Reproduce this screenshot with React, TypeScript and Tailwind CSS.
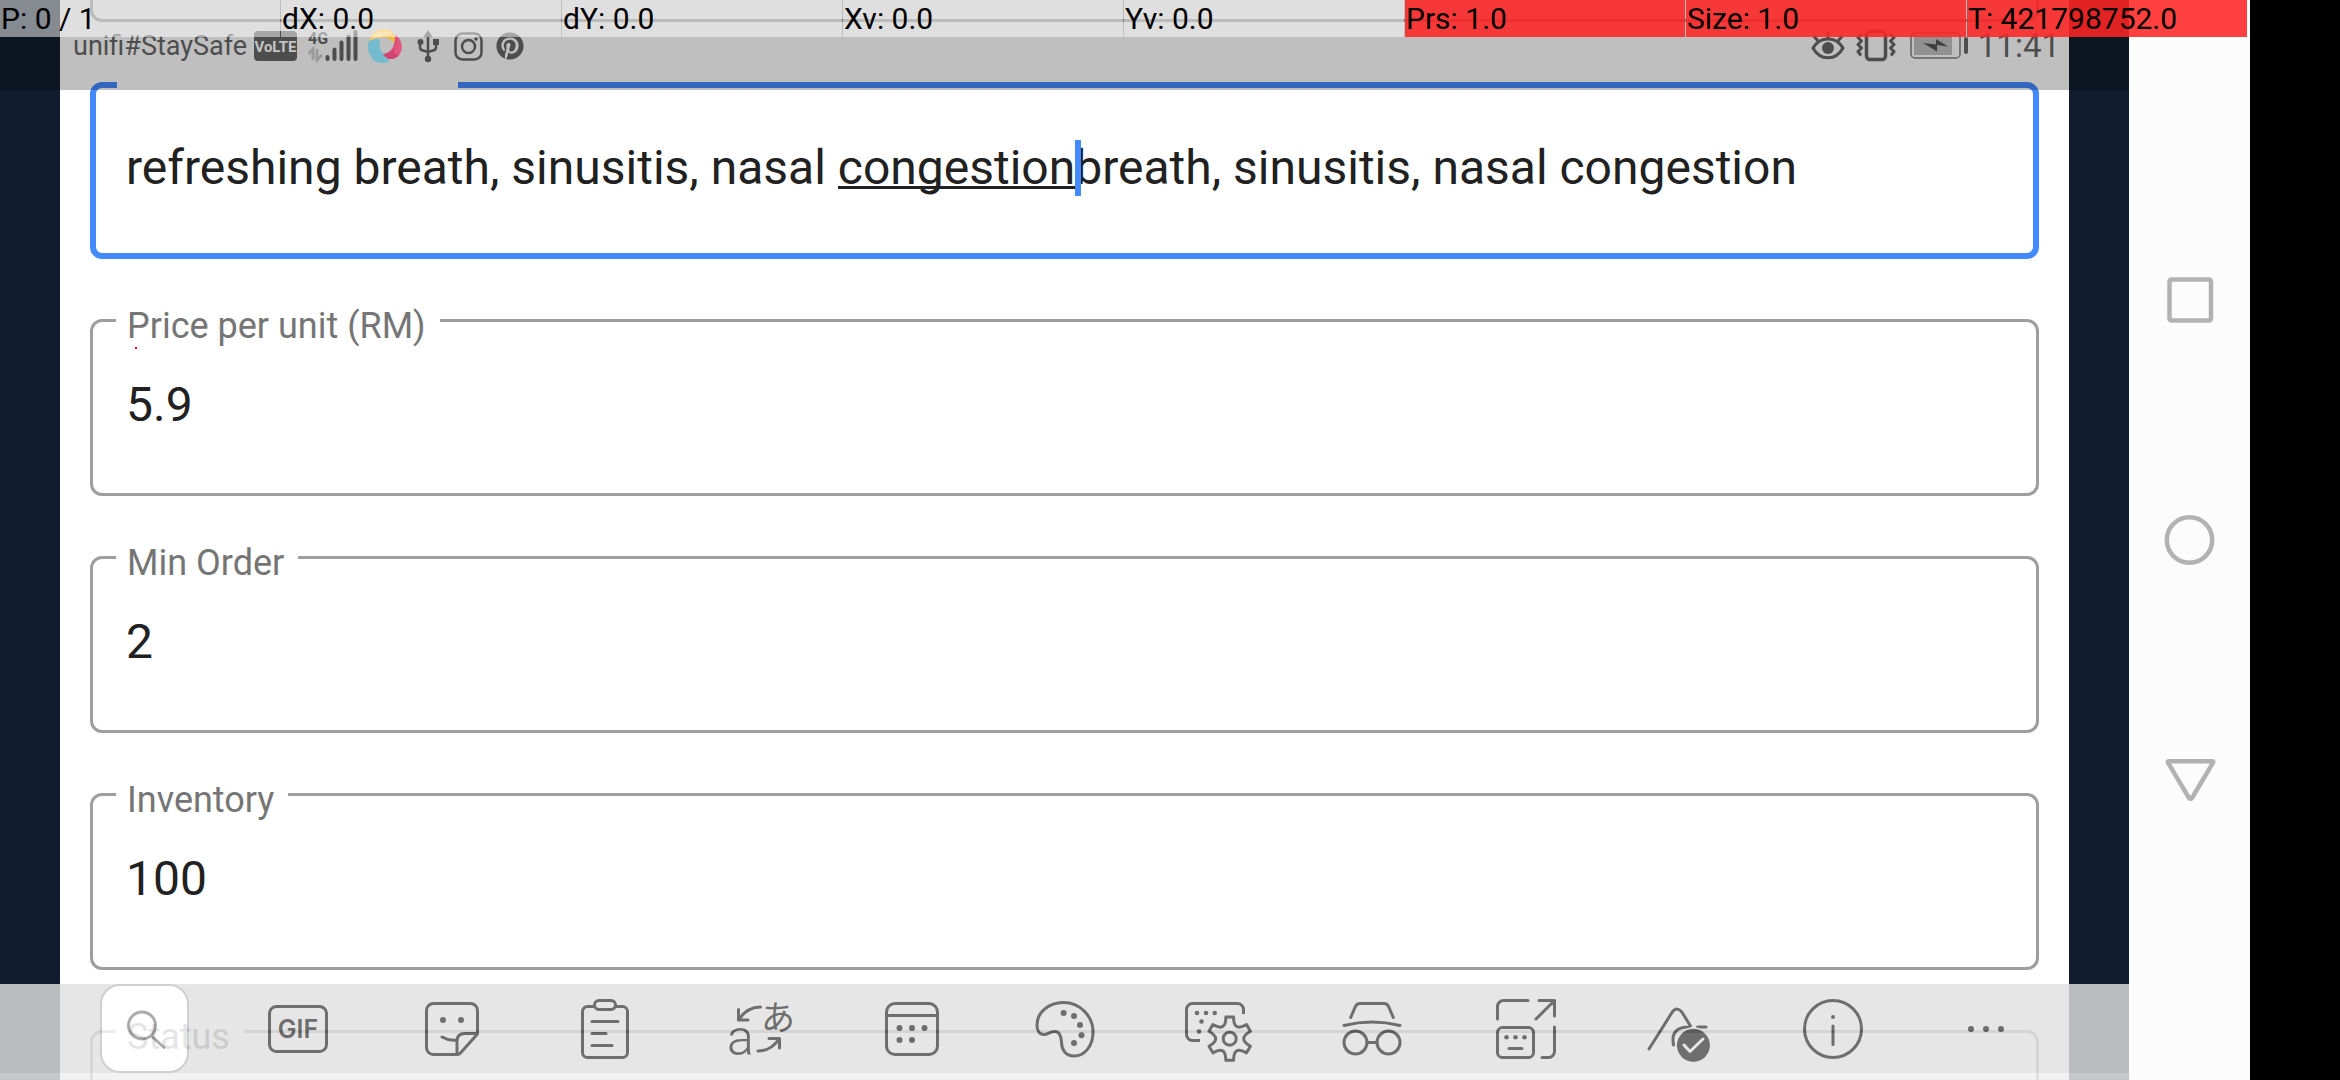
import type { ReactNode } from "react";
import { FaPinterest } from "react-icons/fa";

const pointerCells = [
  { text: "P: 0 / 1", hot: false },
  { text: "dX: 0.0", hot: false },
  { text: "dY: 0.0", hot: false },
  { text: "Xv: 0.0", hot: false },
  { text: "Yv: 0.0", hot: false },
  { text: "Prs: 1.0", hot: true },
  { text: "Size: 1.0", hot: true },
  { text: "T: 421798752.0", hot: true },
];

function PointerBar() {
  return (
    <div className="absolute left-0 right-[93px] top-0 z-30 grid grid-cols-8 gap-px text-[30px] leading-[37px] text-black">
      {pointerCells.map((c) => (
        <div key={c.text} className="h-[37px] bg-white/50">
          <div className={c.hot ? "h-full whitespace-nowrap bg-[#ff0000]/75 pl-px" : "h-full whitespace-nowrap pl-px"}>
            {c.text}
          </div>
        </div>
      ))}
    </div>
  );
}

function StatusBar() {
  return (
    <div className="absolute inset-x-0 top-0 z-20 flex h-[90px] items-start justify-between bg-black/25 pl-[73px] pr-[69px] pt-[29px] text-[#4d4d4d]">
      <div className="flex h-[34px] items-center">
        <span className="w-[181px] whitespace-nowrap text-[27px] leading-[34px]">unifi#StaySafe</span>
        <svg className="h-[34px] w-[43px]" viewBox="0 0 43 34" role="img" aria-label="VoLTE">
          <rect x="0" y="2" width="43" height="30" rx="4" fill="currentColor" />
          <text x="21.5" y="22.500" textAnchor="middle" fontSize="15" fontWeight="700" fontFamily="Roboto, sans-serif" fill="#c4c4c4">VoLTE</text>
        </svg>
        <svg className="ml-[11px] h-[34px] w-[50px]" viewBox="0 0 50 34" role="img" aria-label="4G signal">
          <text x="0" y="15" fontSize="16" fontWeight="700" fontFamily="Roboto, sans-serif" fill="currentColor">4G</text>
          <path d="M0 25l5-5v11M9 20v11l5-5" fill="none" stroke="#9b9b9b" strokeWidth="3" />
          <path d="M19.500 30v-2M26.500 30v-9.500M33.500 30v-16.500M40.500 30V7.500M47.500 30V3" stroke="currentColor" strokeWidth="4" strokeLinecap="round" />
        </svg>
        <svg className="ml-[10px] h-[34px] w-[35px]" viewBox="0 0 35 34" aria-hidden="true">
          <path d="M1 12C4 3 10 0 17 0c7 0 11 4 10 15C22 7 11 6 1 12Z" fill="#efb83a" />
          <path d="M1 12C6 2 16 0 24 4c-2 4-13 2-23 8Z" fill="#f5cf70" />
          <path d="M27 5C34 10 36 20 31 26 27 31 20 32 14 25c9 0 14-9 13-20Z" fill="#e2567f" />
          <path d="M27 5c4 10-1 20-13 20 4 6 12 7 17 1-9 1-2-14-4-21Z" fill="#cf4470" />
          <path d="M0 13c4-3 8-4 12-2-2 8 2 15 10 21-8 5-17 1-20-6-2-4-3-8-2-13Z" fill="#74bccd" />
        </svg>
        <svg className="ml-[14px] h-[34px] w-[22px]" viewBox="0 0 22 34" fill="none" stroke="currentColor" strokeWidth="2.500" aria-hidden="true">
          <path d="M11 6v24M3 15v3q0 3 3 3.500l5 1.500 5-1.500q3-.5 3-3.500v-4" />
          <path d="M11 1l4.500 7h-9Z" fill="currentColor" stroke="none" />
          <circle cx="3.500" cy="13" r="3" fill="currentColor" stroke="none" />
          <rect x="16" y="10" width="6" height="6" fill="currentColor" stroke="none" />
          <circle cx="11" cy="30" r="3.200" fill="currentColor" stroke="none" />
        </svg>
        <svg className="ml-[15px] h-[34px] w-[29px]" viewBox="0 0 29 34" fill="none" stroke="currentColor" strokeWidth="2.500" aria-hidden="true">
          <rect x="1.500" y="4.500" width="26" height="26" rx="7" />
          <circle cx="14.500" cy="17.500" r="6.500" />
          <circle cx="22" cy="10" r="1.800" fill="currentColor" stroke="none" />
        </svg>
        <FaPinterest className="ml-[13px] h-[28px] w-[28px]" aria-hidden="true" />
      </div>
      <div className="flex h-[34px] items-center">
        <svg className="h-[34px] w-[34px]" viewBox="0 0 34 34" fill="none" stroke="currentColor" strokeWidth="3" aria-hidden="true">
          <path d="M2 19C9 7 25 7 32 19 25 32 9 32 2 19Z" />
          <path d="M17 9V2M7 12L2.500 6.500M27 12l4.500-5.500" />
          <circle cx="17" cy="19" r="6" fill="currentColor" stroke="none" />
        </svg>
        <svg className="ml-[11px] h-[34px] w-[40px]" viewBox="0 0 40 34" fill="none" stroke="currentColor" strokeWidth="3" strokeLinejoin="round" aria-hidden="true">
          <rect x="10.500" y="2.500" width="19" height="28" rx="3.500" strokeWidth="3.500" />
          <path d="M5.500 5L2 8.500 5.500 12 2 15.500 5.500 19 2 22.500 5 26.500M34.500 5L38 8.500 34.500 12l3.500 3.500-3.500 3.500 3.500 3.500-3 4" />
        </svg>
        <svg className="ml-[14px] h-[34px] w-[58px]" viewBox="0 0 58 34" fill="none" aria-hidden="true">
          <rect x="1" y="4" width="49" height="25" rx="4" stroke="#606060" strokeWidth="1.500" />
          <rect x="4" y="7" width="38" height="19" fill="#919191" />
          <path d="M13 14l13 1.500V10l12 7.500-11-1.500v6.500Z" fill="#3e3e3e" />
          <rect x="54" y="8" width="4" height="17" rx="2" fill="currentColor" />
        </svg>
        <span className="ml-[10px] text-[33px] leading-[34px]">11:41</span>
      </div>
    </div>
  );
}

function Field({ id, label, value }: { id: string; label: string; value: string }) {
  return (
    <fieldset className="min-w-0 shrink-0 rounded-xl border-[3px] border-[#9e9e9e]">
      <legend className="ml-[23px] h-[3px] pl-[11px] pr-[14px]">
        <label htmlFor={id} className="-mt-[15px] block text-[36px] leading-[44px] text-[#757575]">
          {label}
        </label>
      </legend>
      <input
        id={id}
        defaultValue={value}
        className="block h-[171px] w-full bg-transparent pb-[6px] pl-[33px] pr-8 text-[48px] text-[#212121] outline-none"
      />
    </fieldset>
  );
}

function KeywordsField() {
  return (
    <fieldset className="relative min-w-0 shrink-0 rounded-xl border-[6px] border-[#448aff]">
      <legend className="ml-[21px] h-[6px] w-[341px]" />
      <input
        aria-label="Keywords"
        defaultValue="refreshing breath, sinusitis, nasal congestionbreath, sinusitis, nasal congestion"
        className="block h-[165px] w-full bg-transparent pb-[6px] pl-[30px] pr-8 text-[48px] text-[#212121] outline-none"
      />
      {/* composing underline and text cursor */}
      <span className="absolute left-[742px] top-[98px] h-[3px] w-[237px] bg-[#212121]" />
      <span className="absolute left-[979px] top-[52px] h-14 w-[6px] bg-[#448aff]" />
    </fieldset>
  );
}

function Glyph({ children }: { children: ReactNode }) {
  return (
    <svg className="size-[72px]" viewBox="0 0 72 72" fill="none" stroke="currentColor" strokeWidth="3" strokeLinecap="round" strokeLinejoin="round" aria-hidden="true">
      {children}
    </svg>
  );
}

function Dots({ at, r }: { at: [number, number][]; r: number }) {
  return (
    <g fill="currentColor" stroke="none">
      {at.map(([x, y]) => (
        <circle key={`${x}-${y}`} cx={x} cy={y} r={r} />
      ))}
    </g>
  );
}

// Six-toothed gear outline around (cx, cy).
function gearPath(cx: number, cy: number) {
  const pt = (deg: number, r: number) => {
    const a = ((deg - 90) * Math.PI) / 180;
    return `${(cx + r * Math.cos(a)).toFixed(2)} ${(cy + r * Math.sin(a)).toFixed(2)}`;
  };
  let d = `M${pt(-10, 22)}`;
  for (let k = 0; k < 360; k += 60) {
    d += `L${pt(k + 10, 22)}C${pt(k + 19, 12)} ${pt(k + 41, 12)} ${pt(k + 50, 22)}`;
  }
  return d + "Z";
}

const tools: { name: string; art: ReactNode }[] = [
  {
    name: "GIF",
    art: (
      <>
        <rect x="7.500" y="13.500" width="57" height="45" rx="7" />
        <text x="36" y="45" textAnchor="middle" fontSize="25" fontWeight="600" fontFamily="Inter, sans-serif" fill="currentColor" stroke="none">GIF</text>
      </>
    ),
  },
  {
    name: "Stickers",
    art: (
      <>
        <path d="M41 61.500H17.500a7 7 0 0 1-7-7v-37a7 7 0 0 1 7-7h37a7 7 0 0 1 7 7V41L44 60.500q-1.500 1-3 1V48q0-7.500 8-7.500h12.500" />
        <path d="M26 44q7 4 14.500 3" />
        <Dots at={[[27, 27], [45, 27]]} r={3} />
      </>
    ),
  },
  {
    name: "Clipboard",
    art: (
      <>
        <path d="M25 13.500h-6.500a5 5 0 0 0-5 5v41a5 5 0 0 0 5 5h35a5 5 0 0 0 5-5v-41a5 5 0 0 0-5-5H47" />
        <rect x="25.500" y="7.500" width="21" height="9" rx="4.500" />
        <path d="M23 28.500h26M23 40.500h14M23 52.500h20" />
      </>
    ),
  },
  {
    name: "Translate",
    art: (
      <>
        <text x="4" y="62" fontSize="50" fontFamily="Roboto, sans-serif" fontWeight="300" fill="currentColor" stroke="none">a</text>
        <text x="38" y="36.500" fontSize="34" fontWeight="400" fontFamily="'Noto Sans CJK JP', sans-serif" fill="currentColor" stroke="none">あ</text>
        <path d="M37.500 14Q24 14 16 26.500M15.500 16.500v10.500H25M35 58Q48 58 56 46M46 45.500h10.500V55" />
      </>
    ),
  },
  {
    name: "Calendar",
    art: (
      <>
        <rect x="10.500" y="10.500" width="51" height="51" rx="8.500" />
        <path d="M10.500 22.500h51" />
        <Dots at={[[23.5, 35], [36, 35], [48.5, 35], [23.5, 47], [36, 47]]} r={3} />
      </>
    ),
  },
  {
    name: "Themes",
    art: (
      <>
        <path d="M8 32C8 19 20 9.500 34.500 9.500 52 9.500 64 24 64 39 64 54 55 63 45 63 36 63 32.500 56 32.500 49 32 42 30 38.500 26 38.500 21 38.500 19 41.500 15 41.500 10 41.500 8 37 8 32Z" />
        <Dots at={[[34.6, 20], [45, 23], [51, 32], [52.5, 42.3], [45, 50]]} r={3} />
      </>
    ),
  },
  {
    name: "Keyboard settings",
    art: (
      <>
        <path strokeLinecap="butt" d="M17 47.500H9.500a6 6 0 0 1-6-6v-25a6 6 0 0 1 6-6h45a6 6 0 0 1 6 6V21" />
        <Dots at={[[14, 20], [23, 20], [31.7, 20], [18.5, 28.5], [16, 38.5]]} r={2.3} />
        <path d={gearPath(46.7, 45.7)} />
        <circle cx="46.700" cy="45.700" r="6.500" />
      </>
    ),
  },
  {
    name: "Incognito",
    art: (
      <>
        <path d="M14.700 24.500l4.700-11q1.500-3 4.500-3h24.200q3 0 4.500 3l4.700 11M8 32.500q28-7 56 0M31 49.500h10" />
        <circle cx="19.500" cy="49.500" r="11.500" />
        <circle cx="52.500" cy="49.500" r="11.500" />
      </>
    ),
  },
  {
    name: "Floating keyboard",
    art: (
      <>
        <path d="M7.500 26V13.500a6 6 0 0 1 6-6H38M49 7.500h15.500V23M64 8L46 26M64.500 34v24.500a6 6 0 0 1-6 6H52" />
        <rect x="7.500" y="34.500" width="36" height="30" rx="5" />
        <Dots at={[[16.5, 44.3], [25.5, 44.3], [34.5, 44.3]]} r={2.3} />
        <path d="M19 55.500h13" />
      </>
    ),
  },
  {
    name: "Handwriting",
    art: (
      <>
        <path d="M6 56L29.300 19q4.500-6 9.500 0L47.500 33M30.500 52Q27 34 46 34M54.500 34H63" />
        <circle cx="50.400" cy="52.300" r="18" fill="#e1e1e1" stroke="none" />
        <circle cx="50.400" cy="52.300" r="16.500" fill="currentColor" stroke="none" />
        <path d="M41 52l6 6.500L60 46" stroke="#e1e1e1" />
      </>
    ),
  },
  {
    name: "Info",
    art: (
      <>
        <circle cx="36" cy="36" r="28.500" />
        <path d="M36 33v18.500" />
        <Dots at={[[36, 24]]} r={2} />
      </>
    ),
  },
  { name: "More", art: <Dots at={[[21, 36], [36, 36], [51, 36]]} r={3} /> },
];

function KeyboardBar() {
  return (
    <div className="absolute inset-x-0 bottom-0 z-20 bg-[#f0f0f0] pb-[7px] text-[#4d4d4d] opacity-[0.81]">
      <div className="grid h-[89px] grid-cols-13 bg-[#e1e1e1] pl-[68px] pr-[66px]">
        <div className="flex items-center justify-center">
          <button type="button" aria-label="Search" className="flex h-[89px] w-[89px] items-center justify-center rounded-[20px] border-2 border-[#c4c4c4] bg-white text-[#9a9a9a]">
            <Glyph>
              <circle cx="33" cy="32.500" r="13.500" />
              <path d="M43 43.500L55 54.500" />
            </Glyph>
          </button>
        </div>
        {tools.map((t) => (
          <button key={t.name} type="button" aria-label={t.name} className="flex items-center justify-center">
            <Glyph>{t.art}</Glyph>
          </button>
        ))}
      </div>
    </div>
  );
}

function NavBar() {
  return (
    <nav className="flex w-[121px] shrink-0 flex-col justify-center bg-[#fcfcfc] text-[#b2b2b2]">
      <button type="button" aria-label="Recent apps" className="flex h-60 items-center justify-center">
        <svg className="size-[52px]" viewBox="0 0 52 52" fill="none" stroke="currentColor" strokeWidth="4.500">
          <rect x="5.500" y="5.500" width="41.500" height="41" rx="2" />
        </svg>
      </button>
      <button type="button" aria-label="Home" className="flex h-60 items-center justify-center">
        <svg className="size-[52px]" viewBox="0 0 52 52" fill="none" stroke="currentColor" strokeWidth="4.500">
          <circle cx="25.500" cy="26" r="22.700" />
        </svg>
      </button>
      <button type="button" aria-label="Back" className="flex h-60 items-center justify-center">
        <svg className="size-[52px]" viewBox="0 0 52 52" fill="none" stroke="currentColor" strokeWidth="4.500" strokeLinejoin="round">
          <path d="M4.500 7.200h44q1.200.3.500 1.500L28 44q-1.500 2-3 0L4 8.700q-.6-1.200.5-1.500Z" />
        </svg>
      </button>
    </nav>
  );
}

export default function App() {
  return (
    <div className="relative flex h-screen overflow-hidden bg-black font-['Roboto',sans-serif]">
      <main className="relative min-w-0 flex-1 overflow-hidden bg-[#111d2e] px-[60px]">
        <form className="flex h-full flex-col gap-[60px] overflow-hidden bg-white px-[30px]">
          <div className="h-[22px] shrink-0 rounded-b-xl border-[3px] border-t-0 border-[#9e9e9e]" />
          <KeywordsField />
          <div className="relative flex shrink-0 flex-col">
            <Field id="price" label="Price per unit (RM)" value="5.9" />
            <span className="absolute left-[45px] top-[28px] size-[2px] bg-[#ff0000]" />
          </div>
          <Field id="min-order" label="Min Order" value="2" />
          <Field id="inventory" label="Inventory" value="100" />
          <Field id="status" label="Status" value="" />
        </form>
        <StatusBar />
        <KeyboardBar />
      </main>
      <NavBar />
      <div className="w-[90px] shrink-0 bg-black" />
      <PointerBar />
    </div>
  );
}
